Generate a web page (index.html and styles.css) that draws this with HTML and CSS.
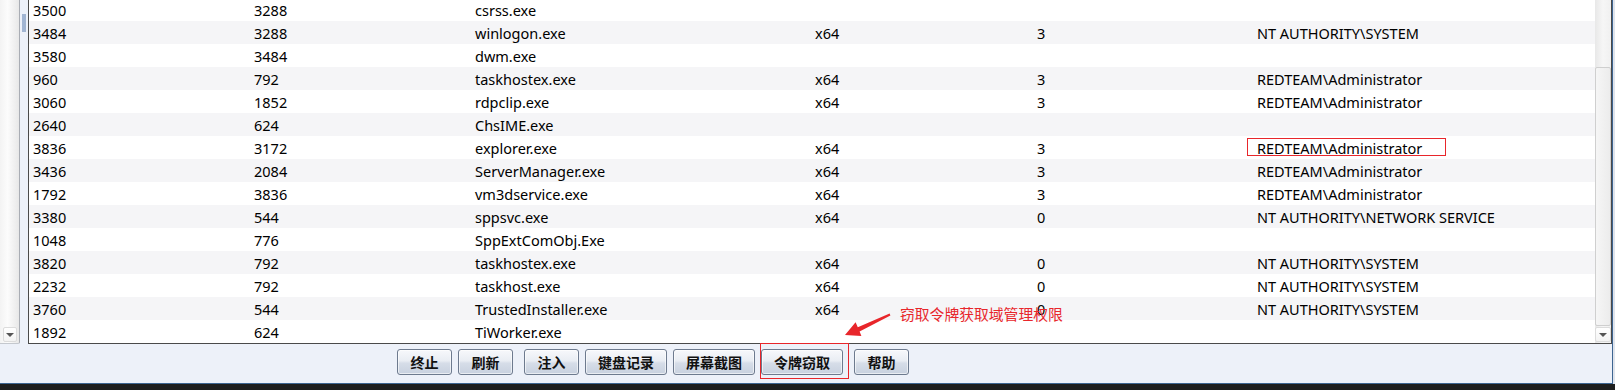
FILE: index.html
```html
<!DOCTYPE html>
<html lang="zh-CN">
<head>
<meta charset="UTF-8">
<title>进程列表</title>
<link rel="stylesheet" href="styles.css">
</head>
<body>

<div class="window">
    <div class="main">
        <div class="side-scroll">
            <div class="side-track"></div>
            <div class="scroll-btn"><span class="tri"></span></div>
        </div>
        <div class="splitter"><div class="grip"></div></div>
        <div class="grid">
            <div class="rows">
                <div class="row"><span>3500</span><span>3288</span><span>csrss.exe</span><span></span><span></span><span></span></div>
                <div class="row"><span>3484</span><span>3288</span><span>winlogon.exe</span><span>x64</span><span>3</span><span>NT AUTHORITY\SYSTEM</span></div>
                <div class="row"><span>3580</span><span>3484</span><span>dwm.exe</span><span></span><span></span><span></span></div>
                <div class="row"><span>960</span><span>792</span><span>taskhostex.exe</span><span>x64</span><span>3</span><span>REDTEAM\Administrator</span></div>
                <div class="row"><span>3060</span><span>1852</span><span>rdpclip.exe</span><span>x64</span><span>3</span><span>REDTEAM\Administrator</span></div>
                <div class="row"><span>2640</span><span>624</span><span>ChsIME.exe</span><span></span><span></span><span></span></div>
                <div class="row"><span>3836</span><span>3172</span><span>explorer.exe</span><span>x64</span><span>3</span><span class="marked">REDTEAM\Administrator</span></div>
                <div class="row"><span>3436</span><span>2084</span><span>ServerManager.exe</span><span>x64</span><span>3</span><span>REDTEAM\Administrator</span></div>
                <div class="row"><span>1792</span><span>3836</span><span>vm3dservice.exe</span><span>x64</span><span>3</span><span>REDTEAM\Administrator</span></div>
                <div class="row"><span>3380</span><span>544</span><span>sppsvc.exe</span><span>x64</span><span>0</span><span>NT AUTHORITY\NETWORK SERVICE</span></div>
                <div class="row"><span>1048</span><span>776</span><span>SppExtComObj.Exe</span><span></span><span></span><span></span></div>
                <div class="row"><span>3820</span><span>792</span><span>taskhostex.exe</span><span>x64</span><span>0</span><span>NT AUTHORITY\SYSTEM</span></div>
                <div class="row"><span>2232</span><span>792</span><span>taskhost.exe</span><span>x64</span><span>0</span><span>NT AUTHORITY\SYSTEM</span></div>
                <div class="row"><span>3760</span><span>544</span><span>TrustedInstaller.exe</span><span>x64</span><span>0</span><span>NT AUTHORITY\SYSTEM</span></div>
                <div class="row"><span>1892</span><span>624</span><span>TiWorker.exe</span><span></span><span></span><span></span></div>
            </div>
            <div class="vscroll">
                <div class="vtrack"><div class="thumb"></div></div>
                <div class="scroll-btn"><span class="tri"></span></div>
            </div>
        </div>
    </div>

    <div class="toolbar">
        <button class="btn">终止</button>
        <button class="btn">刷新</button>
        <button class="btn wide-gap">注入</button>
        <button class="btn">键盘记录</button>
        <button class="btn">屏幕截图</button>
        <button class="btn">令牌窃取</button>
        <button class="btn wide-gap">帮助</button>
    </div>

    <!-- annotation drawn over the screenshot -->
    <div class="mark-box"></div>
    <svg class="arrow" width="60" height="40" viewBox="0 0 60 40">
        <polygon fill="#e8262b" points="49.6,8.6 17.8,22.2 15.6,17.2 5,30 21.4,31.0 19.6,26.4 50.4,10.4"/>
    </svg>
    <div class="note">窃取令牌获取域管理权限</div>
</div>
<div class="taskbar"></div>

</body>
</html>
```

FILE: styles.css
```css
body {
    margin: 0;
    padding: 0;
    width: 1615px;
    height: 390px;
    overflow: hidden;
    background-color: #dfe4ec;
    font-family: "Noto Sans", "Noto Sans CJK SC", sans-serif;
}
.window {
    position: relative;
    width: 1612px;
    height: 383px;
    border-right: 1px solid #3d6591;
    border-bottom: 1px solid #3d6591;
    background-color: #edf1f9;
    overflow: hidden;
}
.main {
    display: flex;
    height: 347px;
    margin-top: -3px;
}
.side-scroll {
    width: 19px;
    border-right: 1px solid #a9adb4;
    border-bottom: 1px solid #c4c8ce;
    border-bottom-right-radius: 2px;
    display: flex;
    flex-direction: column;
    background: linear-gradient(to right, #f3f3f3, #fcfcfc 40%, #e8e8e8);
}
.side-track {
    flex: 1;
}
.side-scroll .scroll-btn {
    margin: 0 2px 1px 3px;
}
.scroll-btn {
    height: 15px;
    box-sizing: border-box;
    border: 1px solid #dcdcdc;
    border-radius: 2px;
    background: linear-gradient(#ffffff, #f3f3f3);
    display: flex;
    align-items: center;
    justify-content: center;
}
.tri {
    width: 0;
    height: 0;
    border-left: 4px solid transparent;
    border-right: 4px solid transparent;
    border-top: 4px solid #555;
    margin-top: 1px;
}
.splitter {
    width: 8px;
    padding-top: 17px;
}
.grip {
    width: 4px;
    height: 18px;
    margin-left: 2px;
    background-image: radial-gradient(circle, #9fb3d1 0.7px, transparent 1px);
    background-size: 2px 2px;
}
.grid {
    flex: 1;
    display: flex;
    border: 1px solid #4a4a4a;
    background-color: #fff;
}
.rows {
    flex: 1;
}
.row {
    display: grid;
    grid-template-columns: 221px 221px 340px 222px 220px 1fr;
    padding-left: 4px;
    height: 23px;
    line-height: 25px;
    font-size: 14.5px;
    color: #000;
    white-space: nowrap;
}
.row:nth-child(even) {
    background-color: #f5f5f7;
}
.marked {
    position: relative;
}
.marked::before {
    content: "";
    position: absolute;
    left: -10px;
    top: 2px;
    width: 197px;
    height: 16px;
    border: 1px solid #e8262b;
}
.vscroll {
    width: 16px;
    display: flex;
    flex-direction: column;
    background: linear-gradient(to right, #e8e8e8, #f6f6f6 50%, #f0f0f0);
}
.vtrack {
    flex: 1;
    padding-top: 69px;
    padding-bottom: 1px;
    display: flex;
}
.thumb {
    flex: 1;
    border: 1px solid #cfcfcf;
    border-radius: 2px;
    background: linear-gradient(to right, #f6f6f6, #ececec);
}
.vscroll .scroll-btn {
    margin-bottom: 1px;
}
.toolbar {
    display: flex;
    gap: 6px;
    padding: 5px 0 0 397px;
}
.btn {
    height: 26px;
    padding: 0 12px;
    min-width: 55px;
    border: 1px solid #6d7a8e;
    border-radius: 3px;
    background: linear-gradient(#f7f8fb 0%, #e9edf3 45%, #d6dde8 55%, #c8d1df 100%);
    box-shadow: inset 0 0 0 1px rgba(255, 255, 255, 0.6);
    font-family: "Noto Sans CJK SC", sans-serif;
    font-size: 14px;
    font-weight: bold;
    color: #111;
}
.wide-gap {
    margin-left: 5px;
}
.mark-box {
    position: absolute;
    left: 760px;
    top: 343px;
    width: 87px;
    height: 34px;
    border: 1px solid #e8262b;
}
.arrow {
    position: absolute;
    left: 840px;
    top: 305px;
}
.note {
    position: absolute;
    left: 900px;
    top: 304px;
    font-family: "Noto Sans CJK SC", sans-serif;
    font-size: 14.8px;
    line-height: 20px;
    color: #e8262b;
}
.taskbar {
    height: 6px;
    background-color: #1e1e1e;
}
```
